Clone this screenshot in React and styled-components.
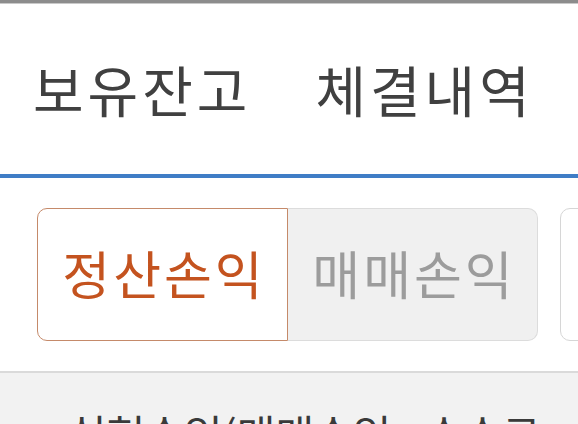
import React, { useState } from "react"
import styled, { createGlobalStyle } from "styled-components"

const GlobalStyle = createGlobalStyle`
  html, body {
    margin: 0;
    padding: 0;
    background: #ffffff;
  }
  body {
    font-family: "Noto Sans CJK KR", "Noto Sans", sans-serif;
    overflow: hidden;
  }
`

const Screen = styled.div`
  width: 578px;
  height: 424px;
  overflow: hidden;
  display: flex;
  flex-direction: column;
  background: #ffffff;
`

const StatusEdge = styled.div`
  height: 3px;
  background: #8c8c8c;
  border-bottom: 1px solid #c9c9c9;
  flex-shrink: 0;
`

const TabBar = styled.nav`
  height: 170px;
  flex-shrink: 0;
  display: flex;
  align-items: center;
  gap: 64px;
  padding: 0 0 0 33px;
  border-bottom: 4px solid #3f7dc6;
`

const Tab = styled.div`
  font-size: 55px;
  line-height: 1;
  color: #404040;
  letter-spacing: 4px;
  white-space: nowrap;
  padding-bottom: 2px;
`

const ToggleRow = styled.div`
  display: flex;
  gap: 22px;
  padding: 30px 0 30px 37px;
  flex-shrink: 0;
`

const Segmented = styled.div`
  display: flex;
  height: 133px;
  flex-shrink: 0;
`

const Segment = styled.button`
  width: ${p => p.$width}px;
  height: 100%;
  display: flex;
  align-items: center;
  justify-content: center;
  margin: 0;
  padding: 0 0 4px 3px;
  font-family: inherit;
  font-size: 52px;
  line-height: 1;
  letter-spacing: 3px;
  cursor: pointer;
  box-sizing: border-box;
  ${p =>
    p.$active
      ? `background: #ffffff; color: #c4531f; border: 1.5px solid #c58a6a;`
      : `background: #f0f0f0; color: #9c9c9c; border: 1px solid #dcdcdc;`}
  border-radius: ${p => (p.$first ? "10px 0 0 10px" : "0 10px 10px 0")};
  ${p => (p.$first ? "" : "border-left: none;")}
`

const GhostControl = styled.div`
  width: 120px;
  height: 133px;
  flex-shrink: 0;
  box-sizing: border-box;
  border: 1px solid #d6d6d6;
  border-radius: 10px;
  background: #ffffff;
`

const InfoPanel = styled.div`
  flex: 1;
  background: #f2f2f2;
  border-top: 2px solid #dadada;
  padding: 39px 0 0 68px;
`

const InfoText = styled.p`
  margin: 0;
  font-size: 42px;
  line-height: 1;
  color: #3a3a3a;
  white-space: nowrap;
`

export default function App() {
  const [mode, setMode] = useState("settle")

  return (
    <Screen>
      <GlobalStyle />
      <StatusEdge />
      <TabBar>
        <Tab>보유잔고</Tab>
        <Tab>체결내역</Tab>
      </TabBar>
      <ToggleRow>
        <Segmented>
          <Segment
            $first
            $width={251}
            $active={mode === "settle"}
            onClick={() => setMode("settle")}
          >
            정산손익
          </Segment>
          <Segment
            $width={250}
            $active={mode === "trade"}
            onClick={() => setMode("trade")}
          >
            매매손익
          </Segment>
        </Segmented>
        <GhostControl />
      </ToggleRow>
      <InfoPanel>
        <InfoText>실현손익(매매손익 - 수수료 - 세금)</InfoText>
      </InfoPanel>
    </Screen>
  )
}
